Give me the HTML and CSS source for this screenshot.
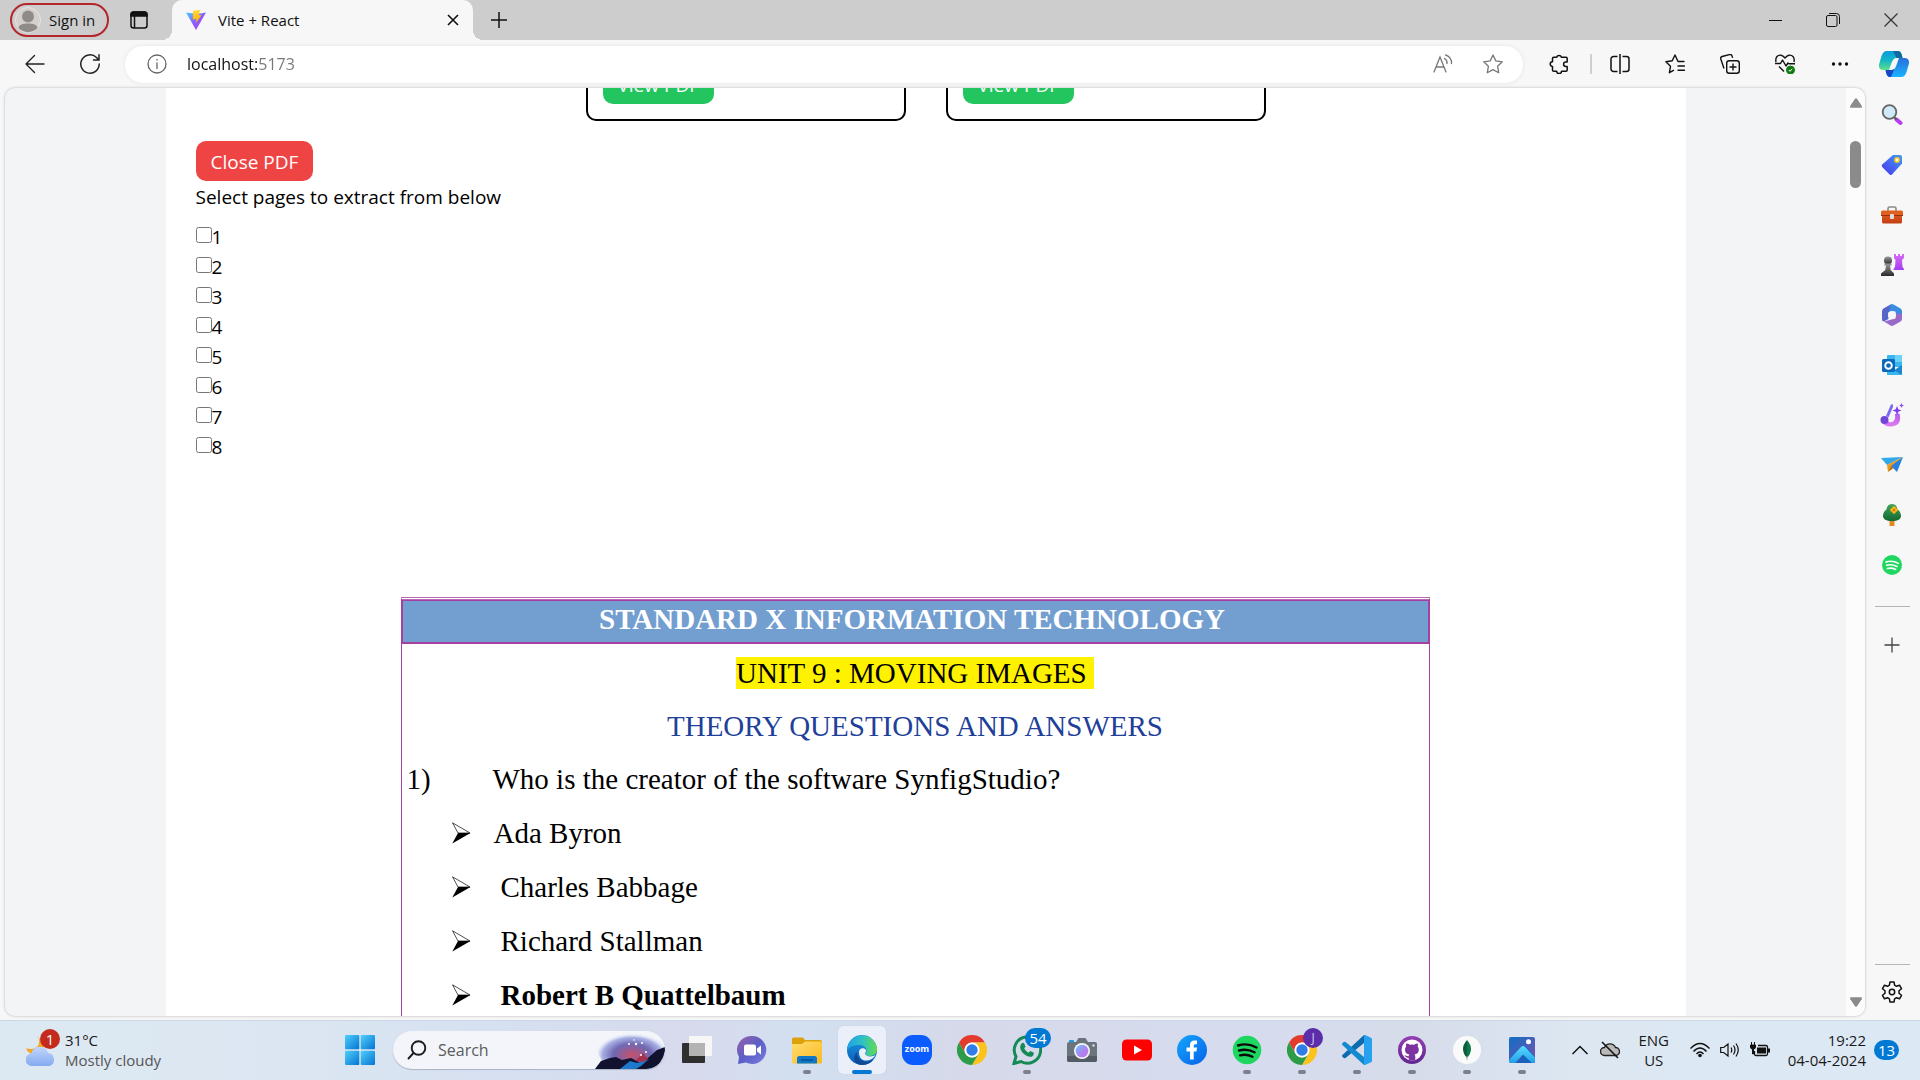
FILE: index.html
```html
<!DOCTYPE html>
<html lang="en">
<head>
<meta charset="utf-8">
<title>Vite + React</title>
<link rel="stylesheet" href="styles.css">
</head>
<body>
<svg class="defs" aria-hidden="true">
  <defs>
    <linearGradient id="g-vite" x1="0" y1="0" x2="1" y2="1"><stop offset="0" stop-color="#41d1ff"/><stop offset=".5" stop-color="#8a5cff"/><stop offset="1" stop-color="#bd34fe"/></linearGradient>
    <linearGradient id="g-bolt" x1="0" y1="0" x2="0" y2="1"><stop offset="0" stop-color="#ffdd35"/><stop offset="1" stop-color="#ffa800"/></linearGradient>
    <linearGradient id="g-cop1" x1="0" y1="0" x2="0" y2="1"><stop offset="0" stop-color="#0a9be0"/><stop offset=".5" stop-color="#16b7c4"/><stop offset="1" stop-color="#5fe08a"/></linearGradient>
    <linearGradient id="g-cop2" x1="0" y1="0" x2="0" y2="1"><stop offset="0" stop-color="#2a6fdb"/><stop offset="1" stop-color="#18b4ff"/></linearGradient>
    <linearGradient id="g-tag" x1="1" y1="0" x2="0" y2="1"><stop offset="0" stop-color="#3f9bf5"/><stop offset="1" stop-color="#4a35ee"/></linearGradient>
    <linearGradient id="g-grey" x1="0" y1="0" x2="0" y2="1"><stop offset="0" stop-color="#999"/><stop offset="1" stop-color="#2a2a2a"/></linearGradient>
    <linearGradient id="g-pink" x1="0" y1="0" x2="0" y2="1"><stop offset="0" stop-color="#d86bf5"/><stop offset="1" stop-color="#a23df2"/></linearGradient>
    <linearGradient id="g-pink2" x1="0" y1="0" x2="0" y2="1"><stop offset="0" stop-color="#b45cf0"/><stop offset="1" stop-color="#e07df2"/></linearGradient>
    <linearGradient id="g-box" x1="0" y1="0" x2="0" y2="1"><stop offset="0" stop-color="#d9531e"/><stop offset="1" stop-color="#c33f12"/></linearGradient>
    <linearGradient id="g-tree" x1="0" y1="0" x2="0" y2="1"><stop offset="0" stop-color="#41a55a"/><stop offset="1" stop-color="#14692f"/></linearGradient>
    <linearGradient id="g-win" x1="0" y1="0" x2="1" y2="1"><stop offset="0" stop-color="#4fd0fb"/><stop offset="1" stop-color="#0673d3"/></linearGradient>
    <linearGradient id="g-chat" x1="0" y1="0" x2="1" y2="1"><stop offset="0" stop-color="#9a62a8"/><stop offset=".5" stop-color="#5b5fc7"/><stop offset="1" stop-color="#7b7fe0"/></linearGradient>
    <linearGradient id="g-fold" x1="0" y1="0" x2="1" y2="1"><stop offset="0" stop-color="#ffde70"/><stop offset="1" stop-color="#fbb820"/></linearGradient>
    <linearGradient id="g-edge1" x1="0" y1="0" x2="1" y2="0"><stop offset="0" stop-color="#1fa3e6"/><stop offset=".5" stop-color="#2fc0c5"/><stop offset="1" stop-color="#62dc4c"/></linearGradient>
    <linearGradient id="g-edge2" x1="0" y1="0" x2="0" y2="1"><stop offset="0" stop-color="#1d9be2"/><stop offset="1" stop-color="#0a5cb8"/></linearGradient>
    <linearGradient id="g-cam" x1="0" y1="0" x2="1" y2="1"><stop offset="0" stop-color="#63c6ff"/><stop offset=".5" stop-color="#a58bf0"/><stop offset="1" stop-color="#c56be8"/></linearGradient>
    <linearGradient id="g-fb" x1="0" y1="0" x2="1" y2="1"><stop offset="0" stop-color="#16a6fa"/><stop offset="1" stop-color="#0562ea"/></linearGradient>
    <linearGradient id="g-photo" x1="0" y1="0" x2="1" y2="1"><stop offset="0" stop-color="#0f6fc4"/><stop offset="1" stop-color="#7a4fb0"/></linearGradient>
    <linearGradient id="g-photo2" x1="0" y1="0" x2="0" y2="1"><stop offset="0" stop-color="#58dcff"/><stop offset="1" stop-color="#1f9fe8"/></linearGradient>
    <linearGradient id="g-git" x1="0" y1="0" x2="0" y2="1"><stop offset="0" stop-color="#9440b4"/><stop offset="1" stop-color="#5f2591"/></linearGradient>
    <linearGradient id="g-cloud" x1="0" y1="0" x2="0" y2="1"><stop offset="0" stop-color="#c3d6fb"/><stop offset="1" stop-color="#84aaf1"/></linearGradient>
    <radialGradient id="g-sky" cx=".5" cy=".6" r=".55"><stop offset="0" stop-color="#c6506a"/><stop offset=".5" stop-color="#6f68b4"/><stop offset=".8" stop-color="#a9b2e4"/><stop offset="1" stop-color="#f2f5fb" stop-opacity="0"/></radialGradient>
    <symbol id="i-chrome" viewBox="0 0 30 30">
      <path d="M2 7.500A15 15 0 0 1 28 7.500H15a7.500 7.500 0 0 0-6.500 11.200z" fill="#e33b2e"/>
      <path d="M28 7.500A15 15 0 0 1 15 30l6.500-11.300A7.500 7.500 0 0 0 15 7.500z" fill="#fcc31e"/>
      <path d="M15 30A15 15 0 0 1 2 7.500l6.500 11.200a7.500 7.500 0 0 0 13 0z" fill="#2c9c48"/>
      <circle cx="15" cy="15" r="7.500" fill="#fff"/><circle cx="15" cy="15" r="5.700" fill="#2f7de9"/>
    </symbol>
    <symbol id="i-arrow" viewBox="0 0 19 22">
      <path d="M.5.800 18 11H6z" fill="none" stroke="#000" stroke-width=".7"/>
      <path d="M18.500 11 .3 21.500 6 11z"/>
    </symbol>
  </defs>
</svg>

<header class="tabbar">
  <button class="profile" type="button">
    <svg width="26" height="26" viewBox="0 0 26 26"><circle cx="13" cy="13" r="12.500" fill="#d3d0cd" stroke="#e6e4e2"/><circle cx="13" cy="9.500" r="6" fill="#8f8b88"/><path d="M3.500 21C4 17.500 8 16.500 13 16.500s9 1 9.500 4.500a13 13 0 0 1-19 0z" fill="#8f8b88"/></svg>
    <span>Sign in</span>
  </button>
  <button class="icon-button tab-actions" type="button" aria-label="Tab actions menu">
    <svg width="18" height="18" viewBox="0 0 18 18" fill="none" stroke="#111" stroke-width="1.500"><rect x="1" y="1" width="16" height="16" rx="2.500"/><path d="M1 3.500a2.500 2.500 0 0 1 2.500-2.500h11A2.500 2.500 0 0 1 17 3.500V5H1z" fill="#111"/><path d="M4.500 5v12"/></svg>
  </button>
  <div class="tab">
    <svg width="20" height="20" viewBox="0 0 20 20"><path d="M0 2.500 8 3.500l5 .2L20 2.500 10 20z" fill="url(#g-vite)"/><path d="M7 .8 14.500 0 12.500 5l3 .2L9.500 13.500l.8-4.500-3.500.6z" fill="url(#g-bolt)"/></svg>
    <span class="tab-title">Vite + React</span>
    <button class="icon-button" type="button" aria-label="Close tab"><svg width="12" height="12" viewBox="0 0 12 12" stroke="#111" stroke-width="1.600"><path d="M1 1l10 10M11 1L1 11"/></svg></button>
  </div>
  <button class="icon-button new-tab" type="button" aria-label="New tab"><svg width="18" height="18" viewBox="0 0 18 18" stroke="#111" stroke-width="1.500"><path d="M9 1v16M1 9h16"/></svg></button>
  <div class="window-controls">
    <button class="icon-button" type="button" aria-label="Minimize"><svg width="14" height="14" viewBox="0 0 14 14" stroke="#111"><path d="M1 7.500h13"/></svg></button>
    <button class="icon-button" type="button" aria-label="Restore"><svg width="14" height="14" viewBox="0 0 14 14" fill="none" stroke="#111"><rect x=".5" y="2.500" width="10.500" height="11" rx="1.500"/><path d="M3 .5h7.500a3 3 0 0 1 3 3V11"/></svg></button>
    <button class="icon-button" type="button" aria-label="Close"><svg width="14" height="14" viewBox="0 0 14 14" stroke="#333" stroke-width="1.200"><path d="M.5.500l13 13M13.500.500l-13 13"/></svg></button>
  </div>
</header>

<nav class="toolbar" aria-label="Browser toolbar">
  <div class="nav-buttons">
    <button class="icon-button" type="button" aria-label="Back"><svg width="20" height="20" viewBox="0 0 20 20" fill="none" stroke="#222" stroke-width="1.400" stroke-linecap="round" stroke-linejoin="round"><path d="M19 10H1M9.500 1.500 1 10l8.500 8.500"/></svg></button>
    <button class="icon-button" type="button" aria-label="Refresh"><svg width="20" height="20" viewBox="0 0 20 20" fill="none" stroke="#222" stroke-width="1.500" stroke-linecap="round"><path d="M19.200 10A9.200 9.200 0 1 1 16.500 3.500L19 6M19 .8V6h-5.500"/></svg></button>
  </div>
  <form class="address">
    <svg width="20" height="20" viewBox="0 0 20 20" fill="none" stroke="#666" stroke-width="1.300"><circle cx="10" cy="10" r="9"/><path d="M10 8.500V15M10 5v1.600"/></svg>
    <input type="text" value="localhost:5173" aria-label="Address">
    <button class="icon-button" type="button" aria-label="Read aloud"><svg width="20" height="20" viewBox="0 0 20 20" fill="none" stroke="#777" stroke-width="1.300" stroke-linecap="round"><path d="M1 18 7 3l6 15M3 13h8M11.500 4.500a5 5 0 0 1 2.500 5M12.500 1a8 8 0 0 1 6 8.500"/></svg></button>
    <button class="icon-button" type="button" aria-label="Add to favourites"><svg width="20" height="20" viewBox="0 0 20 20" fill="none" stroke="#777" stroke-width="1.300" stroke-linejoin="round"><path d="m10 1 2.800 5.900 6.500.9-4.700 4.500 1.100 6.400-5.700-3.100-5.700 3.100 1.100-6.400L.7 7.800l6.500-.9z"/></svg></button>
  </form>
  <div class="actions">
    <button class="icon-button extensions" type="button" aria-label="Extensions"><svg width="20" height="20" viewBox="0 0 20 20" fill="none" stroke="#111" stroke-width="1.500" stroke-linejoin="round"><path d="M4.800 3.200h3a2.300 2.300 0 0 1 4.500 0H17a1.200 1.200 0 0 1 1.200 1.200V8h-1.400a2.200 2.200 0 0 0 0 4.400h1.400v3.500A1.300 1.300 0 0 1 17 17.200h-4.500a2.400 2.400 0 0 1-4.800 0H4.800a1.300 1.300 0 0 1-1.300-1.300v-3.500a2.300 2.300 0 0 1 0-4.600V4.500a1.300 1.300 0 0 1 1.300-1.300z"/></svg></button>
    <span class="divider"></span>
    <button class="icon-button" type="button" aria-label="Split screen"><svg width="20" height="20" viewBox="0 0 20 20" fill="none" stroke="#111" stroke-width="1.500"><path d="M7.500 2.500h-4A2.500 2.500 0 0 0 1 5v10a2.500 2.500 0 0 0 2.500 2.500h4M12.500 2.500h4A2.500 2.500 0 0 1 19 5v10a2.500 2.500 0 0 1-2.500 2.500h-4M10 0v20"/></svg></button>
    <button class="icon-button" type="button" aria-label="Favourites"><svg width="20" height="20" viewBox="0 0 20 20" fill="none" stroke="#111" stroke-width="1.400" stroke-linejoin="round" stroke-linecap="round"><path d="M19 7.500h-6L10 1 7.200 6.800.9 7.800l4.600 4.500-1.100 6.400L8.500 16.400M13 12h6.500M13 16.300h6.500"/></svg></button>
    <button class="icon-button" type="button" aria-label="Collections"><svg width="20" height="20" viewBox="0 0 20 20" fill="none" stroke="#111" stroke-width="1.400" stroke-linejoin="round"><rect x="6.700" y="6.700" width="12.600" height="12.600" rx="2.500"/><path d="M13 9.500v7M9.500 13h7M4 14.500.8 5a2 2 0 0 1 1.300-2.500L9.500.600a2 2 0 0 1 2.500 1.300l.6 2"/></svg></button>
    <button class="icon-button" type="button" aria-label="Browser essentials"><svg width="20" height="20" viewBox="0 0 20 20" fill="none" stroke="#111" stroke-width="1.400" stroke-linejoin="round"><path d="M1 8C0 3 3 .8 6 1.200c2 .3 3 1.500 4 2.800 1-1.300 2-2.500 4-2.800 3-.4 6 1.800 5 6.800M0 9.500h5.500l2-3.500 3.500 6 2-3 1 .8h6M4 12.500l5 5"/><circle cx="15.500" cy="16" r="4" fill="#107c10" stroke="#107c10" stroke-width="1"/><path d="m13.800 16 1.200 1.300 2.200-2.500" stroke="#fff" stroke-width="1"/></svg></button>
    <button class="icon-button" type="button" aria-label="Settings and more"><svg width="20" height="20" viewBox="0 0 20 20"><g fill="#111"><circle cx="3.500" cy="10" r="1.700"/><circle cx="10" cy="10" r="1.700"/><circle cx="16.500" cy="10" r="1.700"/></g></svg></button>
    <button class="icon-button copilot" type="button" aria-label="Copilot"><svg width="30" height="26" viewBox="0 0 30 26"><path d="M14 0h5c2 0 3 1.500 3.500 3l1 4h-6c-2.500 0-4 2-5 5l-2.500 7H4c-3 0-4.500-2.500-4-5.500L2.500 5C3.500 2 5 0 8 0z" fill="url(#g-cop1)"/><path d="M14 0h5c2 0 3 1.500 3.500 3l1 4h-6z" fill="#116a9e"/><path d="M16 26h-5c-2 0-3-1.500-3.500-3l-1-4h6c2.500 0 4-2 5-5L20 7h6c3 0 4.500 2.500 4 5.500L27.500 21c-1 3-2.500 5-5.500 5z" fill="url(#g-cop2)"/><path d="M6.500 19h6c1 0 2-.4 2.800-1L12 26h-1c-2 0-3-1.500-3.500-3z" fill="#1746c9"/></svg></button>
  </div>
</nav>

<div class="workspace">
  <main class="viewport">
    <div class="scroll-area">
      <div class="document">
        <div class="cards">
          <article class="card"><button class="btn btn-view" type="button">View PDF</button></article>
          <article class="card"><button class="btn btn-view" type="button">View PDF</button></article>
        </div>
        <button class="btn btn-close" type="button">Close PDF</button>
        <p class="hint">Select pages to extract from below</p>
        <ul class="pages">
          <li><input type="checkbox" id="p1"><label for="p1">1</label></li>
          <li><input type="checkbox" id="p2"><label for="p2">2</label></li>
          <li><input type="checkbox" id="p3"><label for="p3">3</label></li>
          <li><input type="checkbox" id="p4"><label for="p4">4</label></li>
          <li><input type="checkbox" id="p5"><label for="p5">5</label></li>
          <li><input type="checkbox" id="p6"><label for="p6">6</label></li>
          <li><input type="checkbox" id="p7"><label for="p7">7</label></li>
          <li><input type="checkbox" id="p8"><label for="p8">8</label></li>
        </ul>
        <div class="pdf-view">
          <section class="pdf">
            <h1>STANDARD X INFORMATION TECHNOLOGY</h1>
            <h2><mark>UNIT 9 : MOVING IMAGES </mark></h2>
            <h3>THEORY QUESTIONS AND ANSWERS</h3>
            <p class="question"><span class="number">1)</span>Who is the creator of the software SynfigStudio?</p>
            <ul class="answers">
              <li class="first"><svg width="19" height="22"><use href="#i-arrow"/></svg>Ada Byron</li>
              <li><svg width="19" height="22"><use href="#i-arrow"/></svg>Charles Babbage</li>
              <li><svg width="19" height="22"><use href="#i-arrow"/></svg>Richard Stallman</li>
              <li><svg width="19" height="22"><use href="#i-arrow"/></svg><strong>Robert B Quattelbaum</strong></li>
            </ul>
          </section>
        </div>
      </div>
    </div>
    <div class="scrollbar" aria-hidden="true">
      <svg width="12" height="10" viewBox="0 0 12 10"><path d="M5 .8q1-1.300 2 0l4.700 7q.8 2-.7 2H1q-1.500 0-.7-2z" fill="#8b8b8b"/></svg>
      <span class="thumb"></span>
      <svg class="down" width="12" height="10" viewBox="0 0 12 10"><path d="M5 9.200q1 1.300 2 0l4.700-7q.8-2-.7-2H1q-1.500 0-.7 2z" fill="#8b8b8b"/></svg>
    </div>
  </main>

  <aside class="sidebar" aria-label="Sidebar">
    <button class="icon-button" type="button" aria-label="Search"><svg width="22" height="22" viewBox="0 0 22 22"><path d="m15.500 15.500 4 3.500" stroke="#b63df2" stroke-width="4" stroke-linecap="round"/><path d="m13 13 2.500 2.500" stroke="#555" stroke-width="2"/><circle cx="8.500" cy="8" r="6.800" fill="#cfeafb" stroke="#666" stroke-width="1.800"/></svg></button>
    <button class="icon-button" type="button" aria-label="Shopping"><svg width="22" height="22" viewBox="0 0 22 22"><path d="M12 1h7a2 2 0 0 1 2 2v6.500L11 20.500q-1.200 1-2.400 0L1.200 13q-1-1.200 0-2.400z" fill="url(#g-tag)"/><circle cx="16" cy="6" r="2.200" fill="#fff" stroke="#f5c518" stroke-width="1.500"/></svg></button>
    <button class="icon-button" type="button" aria-label="Tools"><svg width="22" height="22" viewBox="0 0 22 22"><path d="M7 7V4.500Q7 3 8.500 3h5Q15 3 15 4.500V7" fill="none" stroke="#8a8a8a" stroke-width="1.600"/><path d="M0 8q0-1.500 1.500-1.500h19Q22 6.500 22 8v4H0z" fill="#e0601f"/><path d="M1 12h20v6q0 1.500-1.500 1.500h-17Q1 19.500 1 18z" fill="url(#g-box)"/><path d="M0 11.500h22" stroke="#9c2d10"/><rect x="9" y="10" width="4" height="5" rx="1" fill="#ddd"/></svg></button>
    <button class="icon-button" type="button" aria-label="Games"><svg width="24" height="24" viewBox="0 0 24 24"><path d="M14 1h2v2h2V1h2v2h2V1h2v4l-2 2 .5 7 1.500 2v1H13.500v-1l1.500-2 .5-7-1.500-2z" fill="url(#g-pink)"/><circle cx="8" cy="7.500" r="4" fill="url(#g-grey)"/><path d="M4.500 10.500h7v2h-1.500l.7 4.500 3.300 3.500V23H1v-2.500L5.300 17l.7-4.500H4.500z" fill="url(#g-grey)"/></svg></button>
    <button class="icon-button" type="button" aria-label="Microsoft 365"><svg width="22" height="22" viewBox="0 0 22 22"><path d="M9.500.5 2.500 4.500Q1 5.500 1 7v8.500q0 2 2 2l4.500-2.500V8.500L15 4z" fill="#5565c9"/><path d="M9.500.5q1.500-.8 3 0l7 4Q21 5.500 21 7v8L14.500 11.500v-4L8 8z" fill="#3a8de0"/><path d="M21 10v5q0 1.500-1.500 2.500l-7 4q-1.500.8-3 0L3 17.500l11.500-3v-5z" fill="#9a6ac8"/><circle cx="11" cy="11" r="4" fill="#f7f7f7"/></svg></button>
    <button class="icon-button" type="button" aria-label="Outlook"><svg width="22" height="22" viewBox="0 0 22 22"><rect x="6" y="1" width="15" height="12" rx="1" fill="#38b6ee"/><path d="M14 1h7v7h-7z" fill="#6bd3fa"/><path d="m6 21 15-10v9q0 1-1 1z" fill="#1a86d0"/><path d="m21 21-15-9v9z" fill="#35b8f0"/><rect x="1" y="5" width="13" height="13" rx="1.500" fill="#0a68bd"/><circle cx="7.500" cy="11.500" r="3.300" fill="none" stroke="#fff" stroke-width="1.900"/></svg></button>
    <button class="icon-button" type="button" aria-label="Designer"><svg width="24" height="24" viewBox="0 0 24 24"><path d="M19.500 10.500q3 12-8 13-8 .5-10-6l5-1q2 3.500 5.500 2.500 4-1.500 3-8z" fill="url(#g-pink2)"/><path d="M13 1.500q-1.500-1-2.500 1L6 13l2.500 1.500L13 4z" fill="#7a6cf0"/><circle cx="4.500" cy="17" r="4" fill="#7046d8"/><path d="m17 3 1.300 3.200L21.500 7.500l-3.200 1.300L17 12l-1.300-3.200-3.200-1.300 3.200-1.300z" fill="#7d3ff0"/><path d="m21.500 0 .8 1.700 1.700.8-1.700.8-.8 1.700-.8-1.700-1.700-.8 1.700-.8z" fill="#9a4df5"/></svg></button>
    <button class="icon-button" type="button" aria-label="Drop"><svg width="22" height="22" viewBox="0 0 22 22"><path d="M0 4 22 3 6 11z" fill="#31a8ea"/><path d="m6 11 16-8-12 10-3 5z" fill="#ef9a1c"/><path d="m10 12 12-9-6 15z" fill="#2580e0"/><path d="m7 18 3-6 2.500 2z" fill="#b86a10"/></svg></button>
    <button class="icon-button" type="button" aria-label="E-tree"><svg width="22" height="22" viewBox="0 0 22 22"><path d="M8.500 15h5v7h-5z" fill="#e08a1e"/><path d="M11 0c4 0 5 3 5.500 5.500C19 7 20 10 20 12c0 3-3 5-9 5s-9-2-9-5c0-2 1-5 3.500-6.500C6 3 7 0 11 0z" fill="url(#g-tree)"/><g fill="#ffb71b"><circle cx="13" cy="4" r="1.800"/><circle cx="11" cy="6" r="1.800"/><circle cx="15" cy="6" r="1.800"/><circle cx="13" cy="8" r="1.800"/></g><circle cx="13" cy="6" r="1.300" fill="#d67a00"/></svg></button>
    <button class="icon-button" type="button" aria-label="Spotify"><svg width="20" height="20" viewBox="0 0 30 30"><circle cx="15" cy="15" r="15" fill="#1fd760"/><path d="M6 10.500q9.500-3 18.500 2M7 15.500q8-2.300 15.500 1.800M8 20.300q6.500-1.700 12.500 1.500" fill="none" stroke="#fff" stroke-width="2.400" stroke-linecap="round"/></svg></button>
    <hr>
    <button class="icon-button" type="button" aria-label="Customize"><svg width="16" height="16" viewBox="0 0 16 16" stroke="#444" stroke-width="1.300"><path d="M8 .5v15M.5 8h15"/></svg></button>
    <hr class="bottom">
    <button class="icon-button settings" type="button" aria-label="Settings"><svg width="22" height="22" viewBox="0 0 22 22" fill="none" stroke="#111" stroke-width="1.500" stroke-linejoin="round"><path d="M9 1h4l.6 3.200 1.900 1.100 3-1.100 2 3.500L18 9.800v2.400l2.500 2.100-2 3.500-3-1.100-1.900 1.100L13 21H9l-.6-3.200-1.900-1.100-3 1.100-2-3.500L4 12.200V9.800L1.500 7.700l2-3.500 3 1.100 1.900-1.100z"/><circle cx="11" cy="11" r="2.700"/></svg></button>
  </aside>
</div>

<footer class="taskbar">
  <button class="weather" type="button">
    <span class="weather-icon">
      <svg width="30" height="32" viewBox="0 0 30 32"><path d="M12 2q4 11-6 13l-6-.5q3 7 12 6l6-8z" fill="#f5a623"/><path d="M6 32a6 6 0 0 1-.5-12.500 8.500 8.500 0 0 1 16.500-.5A6.700 6.700 0 0 1 23.500 32z" fill="url(#g-cloud)"/></svg>
      <span class="badge badge-red">1</span>
    </span>
    <span class="weather-text"><span class="dark">31°C</span><span>Mostly cloudy</span></span>
  </button>
  <div class="apps">
    <button class="app" type="button" aria-label="Start"><svg width="30" height="30" viewBox="0 0 30 30" fill="url(#g-win)"><rect x="0" y="0" width="14.300" height="14.300" rx="1"/><rect x="15.700" y="0" width="14.300" height="14.300" rx="1"/><rect x="0" y="15.700" width="14.300" height="14.300" rx="1"/><rect x="15.700" y="15.700" width="14.300" height="14.300" rx="1"/></svg></button>
    <label class="search">
      <svg width="20" height="20" viewBox="0 0 20 20" fill="none" stroke="#1c1c1c" stroke-width="1.900" stroke-linecap="round"><circle cx="11.500" cy="8" r="6.800"/><path d="m6.500 13-5 5.500"/></svg>
      <input type="search" placeholder="Search" aria-label="Search">
      <svg width="70" height="38" viewBox="0 0 70 38"><ellipse cx="37" cy="20" rx="34" ry="20" fill="url(#g-sky)"/><path d="M0 38 6 30l9-3 6-1 6 3 9-2 10 5 8-6 8-7 8-3v4Q67 34 56 38z" fill="#11122e"/><path d="m25 38 10-8 7 2 12-4-8 7-5 3z" fill="#1c79cc"/><path d="m40 30 8-8 5 6-5 3z" fill="#a8304f"/><g fill="#fff"><circle cx="34" cy="13" r="1"/><circle cx="41" cy="13" r="1.200"/><circle cx="47" cy="12" r="1"/><circle cx="39" cy="9" r=".8"/><circle cx="51" cy="21" r="1"/><circle cx="46" cy="24" r="1"/></g></svg>
    </label>
    <button class="app" type="button" aria-label="Task view"><svg width="30" height="30" viewBox="0 0 30 30"><rect x="0" y="8" width="23" height="20" rx="1" fill="#2f2f2f"/><rect x="7" y="1" width="23" height="20" rx="1" fill="#f6f6f6"/><path d="M7 8h16v13H8q-1 0-1-1z" fill="#b3b3b3"/></svg></button>
    <button class="app" type="button" aria-label="Chat"><svg width="30" height="30" viewBox="0 0 30 30"><path d="M15 1a14 14 0 1 1-6 26.500L1 29l1-7A14 14 0 0 1 15 1z" fill="url(#g-chat)"/><rect x="7" y="9.500" width="12" height="11" rx="2" fill="#fff"/><path d="m20 13.500 4-3v9l-4-3z" fill="#fff"/></svg></button>
    <button class="app running" type="button" aria-label="File Explorer"><svg width="30" height="30" viewBox="0 0 30 30"><path d="M0 4q0-1.500 1.500-1.500H11L13 5h15q2 0 2 2v8H0z" fill="#dfa10a"/><path d="M0 9h10l3-2.500h15q2 0 2 2V27q0 1.500-1.500 1.500h-27Q0 28.500 0 27z" fill="url(#g-fold)"/><path d="M5 28.500v-5Q5 21 7.500 21h15q2.500 0 2.500 2.500v5z" fill="#0f78c8"/><path d="M9 25h12" stroke="#07508f" stroke-width="1.500"/></svg></button>
    <button class="app running active" type="button" aria-label="Microsoft Edge"><svg width="30" height="30" viewBox="0 0 30 30"><circle cx="15" cy="15" r="15" fill="url(#g-edge2)"/><path d="M.500 12A15 15 0 0 1 30 14c0 5-3.500 7-7 7s-5-1.500-4-3c2-5-2-8-7-8C6 10 2 12 .5 15z" fill="url(#g-edge1)"/><path d="M10 17c0 8 6 10.500 12 9.500 2-.3 4-1.500 5-2.500A15 15 0 0 1 15 30C9 30 4 24 10 17z" fill="#0d4c94"/><path d="M12 17c0-4 5-5 7-2 .5 2-1.500 3-.5 4.500 1.500 2.500 7 2.500 10 .5-3 5-8 6-11 5.500-3.500-.8-5.500-4-5.500-8.500z" fill="#eaf0f9"/></svg></button>
    <button class="app" type="button" aria-label="Zoom"><span class="zoom-logo">zoom</span></button>
    <button class="app" type="button" aria-label="Google Chrome"><svg width="30" height="30"><use href="#i-chrome"/></svg></button>
    <button class="app running" type="button" aria-label="WhatsApp"><svg width="30" height="30" viewBox="0 0 30 30"><path d="M2 28.500 4 21.500A13.200 13.200 0 1 1 9 26.500z" fill="none" stroke="#148a55" stroke-width="3"/><path d="M10 8q1.500-1 2.500 1l1 2.500-1.300 2q1.300 2.700 4.300 4.200l1.800-1.700 3.500 1.700q.5 2.500-2 4-5 1-10-5-3.500-5 .2-8.700z" fill="#148a55"/></svg><span class="badge badge-blue">54</span></button>
    <button class="app" type="button" aria-label="Camera"><svg width="30" height="30" viewBox="0 0 30 30"><rect x="2" y="5" width="5" height="4" rx="1" fill="#1e9be6"/><path d="m9 7 2.500-4h7L21 7h7q2 0 2 2v16q0 2-2 2H2q-2 0-2-2V9q0-2 2-2z" fill="#6a747c"/><path d="M0 21h30v4q0 2-2 2H2q-2 0-2-2z" fill="#535c64"/><circle cx="15" cy="16" r="8" fill="#f4f4f4"/><circle cx="15" cy="16" r="6.300" fill="url(#g-cam)"/><circle cx="26.500" cy="10.500" r="1.200" fill="#dcdcdc"/></svg></button>
    <button class="app" type="button" aria-label="YouTube"><svg width="30" height="30" viewBox="0 0 30 30"><rect y="4.500" width="30" height="21" rx="4.500" fill="#f00"/><path d="m12 10.500 8 4.500-8 4.500z" fill="#fff"/></svg></button>
    <button class="app" type="button" aria-label="Facebook"><svg width="30" height="30" viewBox="0 0 30 30"><circle cx="15" cy="15" r="15" fill="url(#g-fb)"/><path d="M13 24.500v-8h-3.500v-4H13V10q0-4.500 4.500-4.500H20v3.700h-1.700q-1.600 0-1.600 1.600v1.700H20l-.6 4h-2.700v8z" fill="#fff"/></svg></button>
    <button class="app running" type="button" aria-label="Spotify"><svg width="30" height="30" viewBox="0 0 30 30"><circle cx="15" cy="15" r="14.300" fill="#1ed760"/><path d="M6 10.500q9.500-3 18.500 2M7 15.500q8-2.300 15.500 1.800M8 20.300q6.500-1.700 12.500 1.500" fill="none" stroke="#0a0a0a" stroke-width="2.400" stroke-linecap="round"/></svg></button>
    <button class="app running" type="button" aria-label="Google Chrome, profile J"><svg width="30" height="30"><use href="#i-chrome"/></svg><span class="badge badge-purple">J</span></button>
    <button class="app running" type="button" aria-label="Visual Studio Code"><svg width="30" height="30" viewBox="0 0 30 30"><path d="M22 0v8L3.500 23q-1 .7-1.800 0L.4 21.700q-.8-.9 0-1.800z" fill="#0b6cb0"/><path d="M22 30v-8L3.500 7q-1-.7-1.800 0L.4 8.300q-.8.900 0 1.800z" fill="#1389d0"/><path d="M22 0q.6-.3 1.200 0l5.800 2.700q1 .5 1 1.600v21.400q0 1.100-1 1.600L23.200 30q-.6.300-1.200 0z" fill="#25a1ee"/></svg></button>
    <button class="app running" type="button" aria-label="GitHub Desktop"><svg width="30" height="30" viewBox="0 0 30 30"><circle cx="15" cy="15" r="14" fill="url(#g-git)"/><circle cx="15" cy="15" r="10.500" fill="#fff"/><path d="M9.300 8.500q2 0 3.600 1.300a10 10 0 0 1 4.200 0q1.600-1.300 3.600-1.300.5 1.500 0 3 1.500 1.800 1 4.300-.5 3.200-4.200 3.700.8.800.8 2.200v3.300a10.500 10.500 0 0 1-6.600 0v-2.300c-2.700.5-3-1.500-4.200-2.300 1.500-.5 2.200 1.500 4.200.8q0-1 .6-1.700-3.700-.5-4.200-3.700-.5-2.500 1-4.300-.4-1.500.2-3z" fill="#7c329f"/></svg></button>
    <button class="app running" type="button" aria-label="MongoDB Compass"><svg width="30" height="30" viewBox="0 0 30 30"><circle cx="15" cy="15" r="14" fill="#fafafa"/><path d="M15 5q8 9 0 18z" fill="#0b7a4b"/><path d="M15 5q-8 9 0 18z" fill="#0d5c3c"/><path d="M15 21v4" stroke="#9cb8a8"/></svg></button>
    <button class="app running" type="button" aria-label="Photos"><svg width="30" height="30" viewBox="0 0 30 30"><rect x="2" y="2" width="26" height="26" rx="2" fill="url(#g-photo)"/><path d="m9 28 9-10 3-4 7 8v4q0 2-2 2z" fill="#1a62bd"/><path d="M2 25 14 12q2-2 4 0l10 10.500V26q0 2-2 2h-1l-9-8.500L8 28H4q-2 0-2-2z" fill="url(#g-photo2)"/><circle cx="21.500" cy="6.800" r="2.500" fill="#fff"/></svg></button>
  </div>
  <div class="tray">
    <button class="icon-button" type="button" aria-label="Show hidden icons"><svg width="16" height="10" viewBox="0 0 16 10" fill="none" stroke="#111" stroke-width="1.500"><path d="m.5 9 7.500-7.500L15.500 9"/></svg></button>
    <button class="icon-button" type="button" aria-label="OneDrive"><svg width="20" height="18" viewBox="0 0 20 18"><path d="M4.500 14.500a4 4 0 0 1 0-8 6 6 0 0 1 11 0 4 4 0 0 1 0 8z" fill="#b9b9b9" stroke="#222" stroke-width="1.400"/><path d="m2 1 16 16" stroke="#111" stroke-width="1.600"/></svg></button>
    <button class="lang" type="button"><span>ENG</span><span>US</span></button>
    <button class="status" type="button" aria-label="Network, volume and battery">
      <svg width="20" height="16" viewBox="0 0 20 16" fill="none" stroke="#111" stroke-width="1.400"><path d="M.5 6.500q9.500-10 19 0M3.500 9.500q6.500-7 13 0M6.500 12q3.500-4 7 0"/><circle cx="10" cy="13.500" r="1.800" fill="#111" stroke="none"/></svg>
      <svg width="20" height="16" viewBox="0 0 20 16" fill="none" stroke="#111" stroke-width="1.200"><path d="M.7 5.500h3L8 2v12l-4.300-3.500h-3zM11 5.500q1.500 2.500 0 5M13.500 3.500q3 4.500 0 9M16 1.500q4.500 6.500 0 13"/></svg>
      <svg width="20" height="16" viewBox="0 0 20 16"><path d="M8 3.500h8q1.500 0 1.500 1.500v7q0 1.500-1.500 1.500H6Q4.500 13.500 4.500 12V9" fill="none" stroke="#111" stroke-width="1.300"/><rect x="7" y="5.500" width="9" height="6" fill="#111"/><rect x="18" y="6.500" width="2" height="4" fill="#111"/><path d="M.5 3h5v2q0 2-2 2v5h-1V7q-2 0-2-2zM1.500 3V0M4.500 3V0" fill="#111" stroke="#111"/></svg>
    </button>
    <button class="clock" type="button"><span>19:22</span><span>04-04-2024</span></button>
    <span class="count">13</span>
  </div>
</footer>
</body>
</html>
```
FILE: styles.css
```css
* {
  box-sizing: border-box;
}

body {
  display: flex;
  flex-direction: column;
  height: 100vh;
  margin: 0;
  overflow: hidden;
  background: #f7f7f7;
  color: #111;
  font-family: "Open Sans", "Noto Sans", sans-serif;
  font-size: 15px;
}

.defs {
  position: absolute;
  width: 0;
  height: 0;
}

svg {
  display: block;
  flex: none;
}

button,
input {
  margin: 0;
  padding: 0;
  border: 0;
  background: none;
  color: inherit;
  font: inherit;
}

h1,
h2,
h3,
p,
ul {
  margin: 0;
  padding: 0;
  font-weight: normal;
  list-style: none;
}

.icon-button {
  display: flex;
  flex: none;
  align-items: center;
  justify-content: center;
}

/* Tab strip */
.tabbar {
  display: flex;
  flex: none;
  align-items: center;
  height: 40px;
  padding-left: 10px;
  background: #cdcdcd;
}

.profile {
  display: flex;
  align-items: center;
  gap: 8px;
  width: 99px;
  height: 34px;
  padding-left: 3px;
  border: 2px solid #b3262b;
  border-radius: 17px;
}

.tab-actions {
  width: 63px;
  padding-right: 4px;
}

.tab {
  position: relative;
  display: flex;
  align-items: center;
  gap: 12px;
  width: 301px;
  height: 40px;
  padding: 0 14px;
  border-radius: 10px 10px 0 0;
  background: #f7f7f7;
}

.tab::before,
.tab::after {
  content: "";
  position: absolute;
  bottom: 0;
  width: 10px;
  height: 10px;
}

.tab::before {
  right: 100%;
  background: radial-gradient(circle at 0 0, #cdcdcd 10px, #f7f7f7 10px);
}

.tab::after {
  left: 100%;
  background: radial-gradient(circle at 100% 0, #cdcdcd 10px, #f7f7f7 10px);
}

.tab-title {
  flex: 1;
}

.new-tab {
  width: 52px;
}

.window-controls {
  display: flex;
  margin-left: auto;
}

.window-controls .icon-button {
  width: 58px;
  height: 40px;
}

/* Address bar */
.toolbar {
  display: flex;
  flex: none;
  align-items: center;
  height: 48px;
}

.nav-buttons {
  display: flex;
  width: 125px;
  padding-left: 7px;
}

.nav-buttons .icon-button {
  width: 55px;
}

.address {
  display: flex;
  flex: 1;
  align-items: center;
  gap: 20px;
  height: 37px;
  padding: 0 15px 0 22px;
  border-radius: 18px;
  background: #fff;
  box-shadow: 0 0 4px #e4e4e4;
}

.address input {
  flex: 1;
  min-width: 0;
  height: 30px;
  outline: none;
  font-size: 16px;
  /* host name dark, port grey */
  background: linear-gradient(to right, #111 71px, #777 71px);
  background-clip: text;
  -webkit-text-fill-color: transparent;
}

.address .icon-button {
  width: 30px;
}

.actions {
  display: flex;
  align-items: center;
}

.actions .icon-button {
  width: 55px;
}

.actions .extensions {
  width: 67px;
  padding-left: 4px;
}

.divider {
  width: 2px;
  height: 20px;
  background: #cfcfcf;
}

.actions .copilot {
  width: 53px;
}

/* Page area */
.workspace {
  display: flex;
  flex: 1;
  min-height: 0;
}

.viewport {
  display: flex;
  flex: 1;
  min-width: 0;
  margin: 0 0 4px 5px;
  overflow: hidden;
  border-radius: 10px;
  background: #f3f4f6;
  box-shadow: 0 0 3px #b4b4b4;
}

.scroll-area {
  flex: 1;
  min-width: 0;
  overflow: hidden;
}

.document {
  max-width: 1520px;
  /* scrolled so that only the lower edge of the cards shows */
  margin: -41px auto 0;
  padding: 0 30px;
  background: #fff;
  color: #000;
  font-size: 19px;
  line-height: 30px;
}

.cards {
  display: flex;
  justify-content: center;
  gap: 40px;
  margin-bottom: 20px;
}

.card {
  width: 320px;
  padding: 15px;
  border: 2px solid #000;
  border-radius: 10px;
}

.btn {
  display: block;
  height: 40px;
  padding: 1px 15px 0;
  border-radius: 10px;
  color: #fff;
}

.btn-view {
  background: #22c55e;
}

.btn-close {
  background: #ef4444;
}

.hint {
  margin: 1px 0 10px;
}

.pages li {
  display: flex;
  align-items: center;
  height: 30px;
}

.pages input {
  width: 16px;
  height: 16px;
  margin-bottom: 4px;
}

/* Rendered PDF page */
.pdf-view {
  padding: 135px 21px 0 0;
}

.pdf {
  max-width: 1029px;
  margin: 0 auto;
  padding-bottom: 200px;
  border: 1px solid #a6409f;
  border-top: 3px double #b868b4;
  font-family: "Liberation Serif", "Times New Roman", serif;
  font-size: 29px;
  line-height: 53px;
}

.pdf h1 {
  height: 44px;
  margin: 0 0 3px;
  padding-right: 6px;
  border: 1px solid #a6409f;
  border-bottom-width: 2px;
  background: #739ed0;
  color: #fff;
  font-size: 29px;
  font-weight: bold;
  line-height: 36px;
  text-align: center;
}

.pdf h2,
.pdf h3 {
  font-size: 29px;
  text-align: center;
}

.pdf h3 {
  color: #21409a;
}

.pdf mark {
  background: #fff200;
  white-space: pre;
}

.question {
  display: flex;
  padding-left: 5px;
}

.number {
  width: 86px;
}

.answers {
  line-height: 54px;
}

.answers li {
  display: flex;
  align-items: center;
  gap: 30px;
  padding-left: 50px;
}

.answers .first {
  gap: 23px;
}

/* Scrollbar */
.scrollbar {
  display: flex;
  flex-direction: column;
  align-items: center;
  width: 19px;
  padding: 10px 0 9px;
  background: #fcfcfc;
}

.thumb {
  width: 11px;
  height: 47px;
  margin-top: 33px;
  border-radius: 6px;
  background: #8b8b8b;
}

.down {
  margin-top: auto;
}

/* Sidebar */
.sidebar {
  display: flex;
  flex-direction: column;
  align-items: center;
  width: 55px;
  padding: 2px 1px 3px 0;
}

.sidebar .icon-button {
  width: 50px;
  height: 50px;
}

.sidebar hr {
  width: 35px;
  height: 1px;
  margin: 16px 0 13px;
  border: 0;
  background: #b5b5b5;
}

.sidebar .bottom {
  margin: auto 0 2px;
}

/* Taskbar */
.taskbar {
  display: flex;
  flex: none;
  align-items: center;
  height: 60px;
  padding: 0 21px 0 26px;
  background: linear-gradient(to right, #dde9f2 0%, #dbe6f2 16%, #d5dff0 28%, #d7daec 36%, #d2e0f0 42%, #d6d9ea 50%, #d6dcee 66%, #d7dcea 74%, #dce7f2 82%, #dce9f4 100%);
  box-shadow: inset 0 1px #c9d7e6;
  color: #1a1a1a;
}

.weather {
  display: flex;
  flex: none;
  gap: 9px;
  width: 310px;
  text-align: left;
}

.weather-icon {
  position: relative;
  padding-top: 4px;
}

.weather-text,
.lang,
.clock {
  display: flex;
  flex-direction: column;
  line-height: 20px;
}

.weather-text {
  color: #555;
}

.weather-text .dark {
  color: #1a1a1a;
}

.badge {
  position: absolute;
  top: 2px;
  display: flex;
  align-items: center;
  justify-content: center;
  min-width: 20px;
  height: 20px;
  border-radius: 10px;
  color: #fff;
  line-height: 20px;
}

.badge-red {
  top: -1px;
  left: 14px;
  background: #c42b1c;
}

.badge-blue {
  left: 22px;
  width: 26px;
  background: #0078d4;
}

.badge-purple {
  left: 25px;
  background: #5b2da8;
  color: #d9c8f5;
  font-size: 12px;
}

.apps {
  display: flex;
  align-items: center;
  gap: 7px;
}

.app {
  position: relative;
  display: flex;
  flex: none;
  align-items: center;
  justify-content: center;
  width: 48px;
  height: 48px;
  border-radius: 5px;
}

.running::after {
  content: "";
  position: absolute;
  bottom: 0;
  left: 20px;
  width: 8px;
  height: 4px;
  border-radius: 2px;
  background: #7b808c;
}

.active {
  background: #eaeff9;
  box-shadow: 0 0 1px #a9b3c6;
}

.active::after {
  left: 14px;
  width: 20px;
  background: #0078d4;
}

.search {
  display: flex;
  align-items: center;
  width: 272px;
  height: 38px;
  margin: 0 1px 0 2px;
  padding-left: 14px;
  overflow: hidden;
  border-radius: 19px;
  background: #f3f5fb;
  box-shadow: 0 1px 1px #a9b3c6;
}

.search input {
  flex: 1;
  min-width: 0;
  padding-left: 11px;
  outline: none;
  font-size: 16px;
}

.search input::placeholder {
  color: #5c5c5c;
}

.zoom-logo {
  width: 30px;
  height: 30px;
  border-radius: 11px;
  background: #0b5cff;
  color: #fff;
  font-size: 9px;
  font-weight: bold;
  line-height: 28px;
  text-align: center;
}

.tray {
  display: flex;
  align-items: center;
  margin-left: auto;
}

.tray .icon-button {
  width: 30px;
}

.lang {
  width: 58px;
  align-items: center;
}

.status {
  display: flex;
  gap: 10px;
  padding: 0 18px 0 7px;
}

.clock {
  align-items: flex-end;
  margin-right: 8px;
  text-align: right;
}

.count {
  width: 25px;
  height: 20px;
  border-radius: 10px;
  background: #0078d4;
  color: #fff;
  line-height: 20px;
  text-align: center;
}
```
